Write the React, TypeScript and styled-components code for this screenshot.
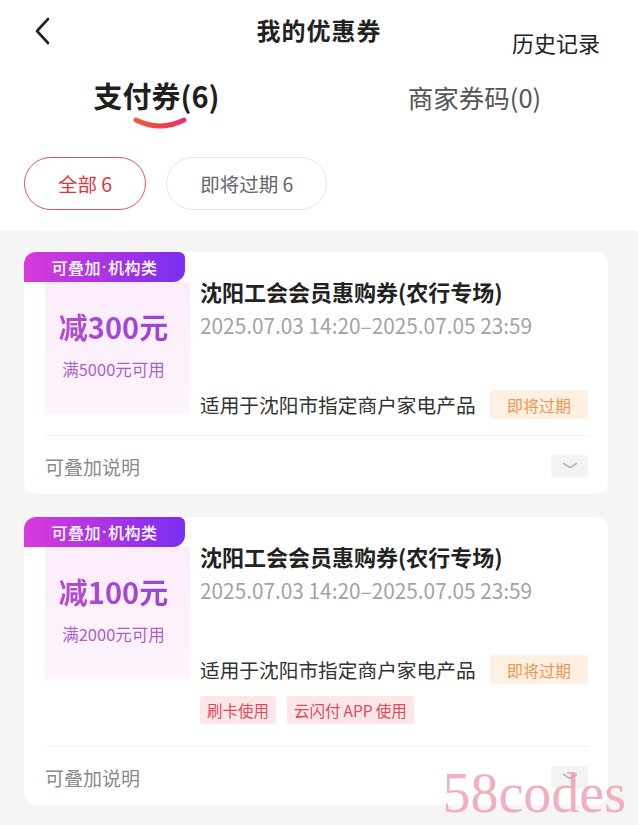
import React from "react";
import styled, { createGlobalStyle } from "styled-components";

const Global = createGlobalStyle`
  html, body { margin: 0; padding: 0; background: #f5f5f5; }
  body { font-family: "Noto Sans CJK SC", "Noto Sans", sans-serif; width: 638px; }
  * { box-sizing: border-box; }
`;

const Page = styled.div`
  position: relative;
  width: 638px;
  min-height: 825px;
  background: #f5f5f5;
  overflow: hidden;
`;

const Top = styled.div`
  background: #fff;
  padding-bottom: 21px;
`;

const Header = styled.div`
  display: grid;
  grid-template-columns: 1fr auto 1fr;
  height: 60px;
`;

const Back = styled.div`
  padding: 17px 0 0 34px;
`;

const Title = styled.div`
  margin-top: 16px;
  font-size: 24px;
  line-height: 28px;
  font-weight: 700;
  color: #222;
  letter-spacing: 1px;
`;

const History = styled.div`
  justify-self: end;
  align-self: end;
  padding-right: 38px;
  font-size: 22px;
  line-height: 28px;
  color: #222;
  margin-bottom: 4px;
`;

const Tabs = styled.div`
  display: grid;
  grid-template-columns: 1fr 1fr;
  align-items: baseline;
  padding-top: 15px;
`;

const Tab = styled.div<{ $active?: boolean }>`
  display: flex;
  flex-direction: column;
  align-items: center;
  font-size: ${(p) => (p.$active ? "29px" : "25.5px")};
  font-weight: ${(p) => (p.$active ? 700 : 400)};
  color: ${(p) => (p.$active ? "#1f1f1f" : "#555")};
  line-height: 40px;
`;

const TabText = styled.span<{ $shift?: number }>`
  margin-left: ${(p) => p.$shift ?? 0}px;
`;

const Chips = styled.div`
  display: flex;
  gap: 20px;
  padding: 27px 24px 0;
`;

const Chip = styled.div<{ $active?: boolean }>`
  height: 53px;
  padding: 0 33px;
  border-radius: 27px;
  display: flex;
  align-items: center;
  font-size: 19.5px;
  color: ${(p) => (p.$active ? "#d8383d" : "#666")};
  border: 1.5px solid ${(p) => (p.$active ? "#d9575a" : "#e6e6e6")};
  background: #fff;
`;

const List = styled.div`
  display: flex;
  flex-direction: column;
  gap: 23px;
  padding: 21px 30px 20px 24px;
`;

const Card = styled.div`
  position: relative;
  background: #fff;
  border-radius: 12px;
  padding: 25px 20px 0 21px;
`;

const Badge = styled.div`
  position: absolute;
  left: 0;
  top: 0;
  width: 161px;
  height: 30px;
  border-radius: 12px 6px 12px 0;
  background: linear-gradient(90deg, #d93adb 0%, #a733e6 55%, #7a2ef2 100%);
  color: #fff;
  font-size: 16px;
  font-weight: 500;
  display: flex;
  align-items: center;
  justify-content: center;
  letter-spacing: 0.5px;
`;

const Dot = styled.span`
  font-family: "Noto Sans", sans-serif;
  margin: 0 1px;
`;

const Body = styled.div`
  display: flex;
  align-items: flex-start;
`;

const Panel = styled.div`
  flex: 0 0 145px;
  height: 132px;
  margin-top: 5px;
  background: linear-gradient(180deg, #fcedfa 0%, #fdf4fd 100%);
  display: flex;
  flex-direction: column;
  align-items: center;
  padding-top: 26px;
`;

const Amount = styled.div`
  font-size: 29px;
  line-height: 36px;
  font-weight: 700;
  background: linear-gradient(90deg, #b64ccb, #9846d6);
  -webkit-background-clip: text;
  background-clip: text;
  color: transparent;
  margin-right: 8px;
`;

const Cond = styled.div`
  margin-top: 15px;
  font-size: 16.5px;
  line-height: 20px;
  color: #ab5fc9;
  margin-right: 8px;
`;

const Info = styled.div`
  flex: 1;
  margin-left: 10px;
  min-width: 0;
`;

const Name = styled.div`
  font-size: 22px;
  line-height: 28px;
  font-weight: 700;
  color: #222;
`;

const Period = styled.div`
  margin-top: 7px;
  font-size: 20.8px;
  line-height: 26px;
  color: #a3a3a3;
  white-space: nowrap;
`;

const Usage = styled.div`
  margin-top: 52px;
  display: flex;
  align-items: center;
  justify-content: space-between;
`;

const UsageText = styled.div`
  font-size: 19.7px;
  line-height: 28px;
  color: #333;
`;

const Expire = styled.div`
  height: 29px;
  padding: 0 17px;
  border-radius: 3px;
  background: #fff0e4;
  color: #f0954c;
  font-size: 16px;
  display: flex;
  align-items: center;
`;

const PayTags = styled.div`
  display: flex;
  gap: 11px;
  margin-top: 12px;
  margin-bottom: 6px;
`;

const PayTag = styled.div`
  height: 28px;
  padding: 0 7px;
  border-radius: 3px;
  background: #fde6e8;
  color: #de4a5a;
  font-size: 15.5px;
  display: flex;
  align-items: center;
  white-space: pre;
`;

const Divider = styled.div`
  height: 1px;
  background: #efefef;
  margin-top: 16px;
`;

const Footer = styled.div`
  height: 58px;
  padding-top: 2px;
  display: flex;
  align-items: center;
  justify-content: space-between;
`;

const FooterText = styled.div`
  font-size: 19px;
  color: #8a8a8a;
`;

const Toggle = styled.div`
  width: 37px;
  height: 22px;
  border-radius: 4px;
  background: #f3f3f3;
  display: flex;
  align-items: center;
  justify-content: center;
`;

const Watermark = styled.div`
  position: absolute;
  right: 12px;
  bottom: 2px;
  font-family: "Liberation Serif", serif;
  font-size: 56px;
  line-height: 60px;
  color: rgba(238, 150, 168, 0.75);
  pointer-events: none;
`;

type Coupon = {
  amount: string;
  cond: string;
  payTags?: string[];
};

const coupons: Coupon[] = [
  { amount: "减300元", cond: "满5000元可用" },
  { amount: "减100元", cond: "满2000元可用", payTags: ["刷卡使用", "云闪付\u2009APP\u2009使用"] },
];

const CouponCard = ({ c }: { c: Coupon }) => (
  <Card>
    <Badge>
      可叠加<Dot>·</Dot>机构类
    </Badge>
    <Body>
      <Panel>
        <Amount>{c.amount}</Amount>
        <Cond>{c.cond}</Cond>
      </Panel>
      <Info>
        <Name>沈阳工会会员惠购券(农行专场)</Name>
        <Period>2025.07.03 14:20–2025.07.05 23:59</Period>
        <Usage>
          <UsageText>适用于沈阳市指定商户家电产品</UsageText>
          <Expire>即将过期</Expire>
        </Usage>
        {c.payTags && (
          <PayTags>
            {c.payTags.map((t) => (
              <PayTag key={t}>{t}</PayTag>
            ))}
          </PayTags>
        )}
      </Info>
    </Body>
    <Divider />
    <Footer>
      <FooterText>可叠加说明</FooterText>
      <Toggle>
        <svg width="16" height="8" viewBox="0 0 16 8">
          <path d="M1.5 1.5 L8 5.5 L14.5 1.5" fill="none" stroke="#b5b5b5" strokeWidth="1.6" strokeLinecap="round" strokeLinejoin="round" />
        </svg>
      </Toggle>
    </Footer>
  </Card>
);

export default function App() {
  return (
    <Page>
      <Global />
      <Top>
        <Header>
          <Back>
            <svg width="20" height="28" viewBox="0 0 20 28">
              <path d="M14 2 L3 14 L14 26" fill="none" stroke="#222" strokeWidth="2.6" strokeLinecap="round" strokeLinejoin="round" />
            </svg>
          </Back>
          <Title>我的优惠券</Title>
          <History>历史记录</History>
        </Header>
        <Tabs>
          <Tab $active>
            <TabText $shift={-6}>支付券(6)</TabText>
            <svg width="56" height="14" viewBox="0 0 56 14" style={{ marginTop: 1 }}>
              <defs>
                <linearGradient id="ul" x1="0" x2="1" y1="0" y2="0">
                  <stop offset="0" stopColor="#f25a3c" />
                  <stop offset="0.6" stopColor="#ee3f4d" />
                  <stop offset="1" stopColor="#e0357a" />
                </linearGradient>
              </defs>
              <path d="M4 4 Q28 16 52 4" fill="none" stroke="url(#ul)" strokeWidth="5" strokeLinecap="round" />
            </svg>
          </Tab>
          <Tab>
            <TabText $shift={-8}>商家券码(0)</TabText>
          </Tab>
        </Tabs>
        <Chips>
          <Chip $active>全部 6</Chip>
          <Chip>即将过期 6</Chip>
        </Chips>
      </Top>
      <List>
        {coupons.map((c, i) => (
          <CouponCard key={i} c={c} />
        ))}
      </List>
      <Watermark>58codes</Watermark>
    </Page>
  );
}
